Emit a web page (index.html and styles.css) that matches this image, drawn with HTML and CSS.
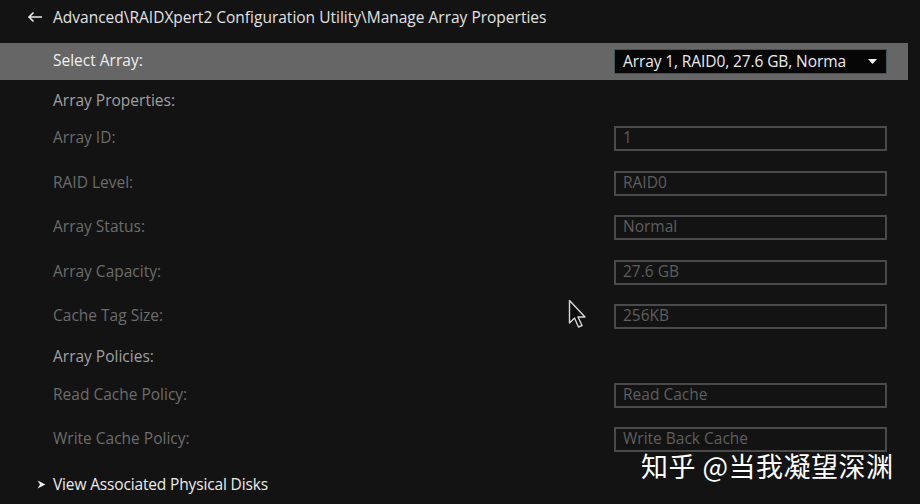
FILE: index.html
```html
<!DOCTYPE html>
<html>
<head>
<meta charset="utf-8">
<link rel="stylesheet" href="styles.css">
</head>
<body>
<div class="screen">
  <div class="header">
    <svg class="back" width="16" height="12" viewBox="0 0 16 12"><path d="M15 6H2M6.5 1.5L2 6l4.5 4.5" fill="none" stroke="#e6e6e6" stroke-width="1.6"/></svg>
    <span class="title">Advanced\RAIDXpert2 Configuration Utility\Manage Array Properties</span>
  </div>
  <div class="select-row">
    <span class="select-label">Select Array:</span>
    <div class="dropdown">
      <span class="dd-text">Array 1, RAID0, 27.6 GB, Norma</span>
      <svg class="dd-arrow" width="9" height="5" viewBox="0 0 9 5"><path d="M0 0h9L4.5 5z" fill="#f0f0f0"/></svg>
    </div>
  </div>
  <div class="section-head first">Array Properties:</div>
  <div class="item"><span class="label">Array ID:</span><div class="field">1</div></div>
  <div class="item"><span class="label">RAID Level:</span><div class="field">RAID0</div></div>
  <div class="item"><span class="label">Array Status:</span><div class="field">Normal</div></div>
  <div class="item"><span class="label">Array Capacity:</span><div class="field">27.6 GB</div></div>
  <div class="item"><span class="label">Cache Tag Size:</span><div class="field">256KB</div></div>
  <div class="section-head second">Array Policies:</div>
  <div class="item"><span class="label">Read Cache Policy:</span><div class="field">Read Cache</div></div>
  <div class="item"><span class="label">Write Cache Policy:</span><div class="field">Write Back Cache</div></div>
  <div class="link-row">
    <svg class="chev" width="9" height="9" viewBox="0 0 9 9"><path d="M0.5 0.5L8.5 4.5L0.5 8.5L3 4.5z" fill="#f0f0f0"/></svg>
    <span class="link">View Associated Physical Disks</span>
  </div>
  <svg class="cursor" width="20" height="32" viewBox="0 0 20 32"><path d="M1.5 1.5V24l5-5 4 9 3.5-1.5-4-8.5h7z" fill="#0a0a0a" stroke="#d8d8d8" stroke-width="1.4" stroke-linejoin="round"/></svg>
  <div class="watermark">知乎 @当我凝望深渊</div>
</div>
</body>
</html>
```
FILE: styles.css
```css
html, body {
  margin: 0;
  padding: 0;
  background: #131313;
}
.screen {
  position: relative;
  width: 920px;
  height: 504px;
  overflow: hidden;
  background: #131313;
  font-family: "Open Sans", "Noto Sans", sans-serif;
  font-size: 15.5px;
}
.header {
  height: 34px;
  display: flex;
  align-items: center;
  padding-left: 27px;
  gap: 10px;
}
.title {
  color: #e2e2e2;
}
.select-row {
  margin-top: 9px;
  height: 37px;
  width: 908px;
  background: #666666;
  display: flex;
  align-items: center;
  box-sizing: border-box;
  padding-left: 53px;
}
.select-label {
  color: #f0f0f0;
  width: 561px;
  margin-top: -3px;
}
.dropdown {
  width: 273px;
  height: 25px;
  box-sizing: border-box;
  background: #060606;
  border: 1px solid #3d5858;
  display: flex;
  align-items: center;
  padding-left: 8px;
  padding-right: 9px;
}
.dd-text {
  color: #ececec;
  white-space: nowrap;
  width: 228px;
  line-height: 21px;
  letter-spacing: -0.1px;
}
.dd-arrow {
  margin-left: 18px;
}
.section-head {
  padding-left: 53px;
  color: #a0a0a0;
  display: flex;
  align-items: center;
}
.section-head.first {
  height: 42px;
  padding-bottom: 2px;
  box-sizing: border-box;
}
.section-head.second {
  height: 34px;
  align-items: flex-start;
  line-height: 22px;
}
.item {
  height: 44.5px;
  display: flex;
  align-items: flex-start;
  padding-left: 53px;
  padding-top: 4px;
  box-sizing: border-box;
}
.label {
  width: 561px;
  color: #6c6c6c;
  line-height: 22px;
}
.field {
  width: 273px;
  height: 25px;
  box-sizing: border-box;
  border: 2px solid #4a4a4a;
  color: #5e5e5e;
  padding-left: 7px;
  line-height: 19px;
}
.link-row {
  height: 33px;
  display: flex;
  align-items: center;
  padding-left: 37px;
  gap: 7px;
}
.link {
  color: #ececec;
  letter-spacing: -0.15px;
}
.cursor {
  position: absolute;
  left: 568px;
  top: 299px;
}
.watermark {
  position: absolute;
  left: 641px;
  top: 452px;
  color: #ffffff;
  font-family: "Noto Sans CJK SC", "Noto Sans", sans-serif;
  font-size: 27px;
  line-height: 28px;
  letter-spacing: 0.5px;
}
```
